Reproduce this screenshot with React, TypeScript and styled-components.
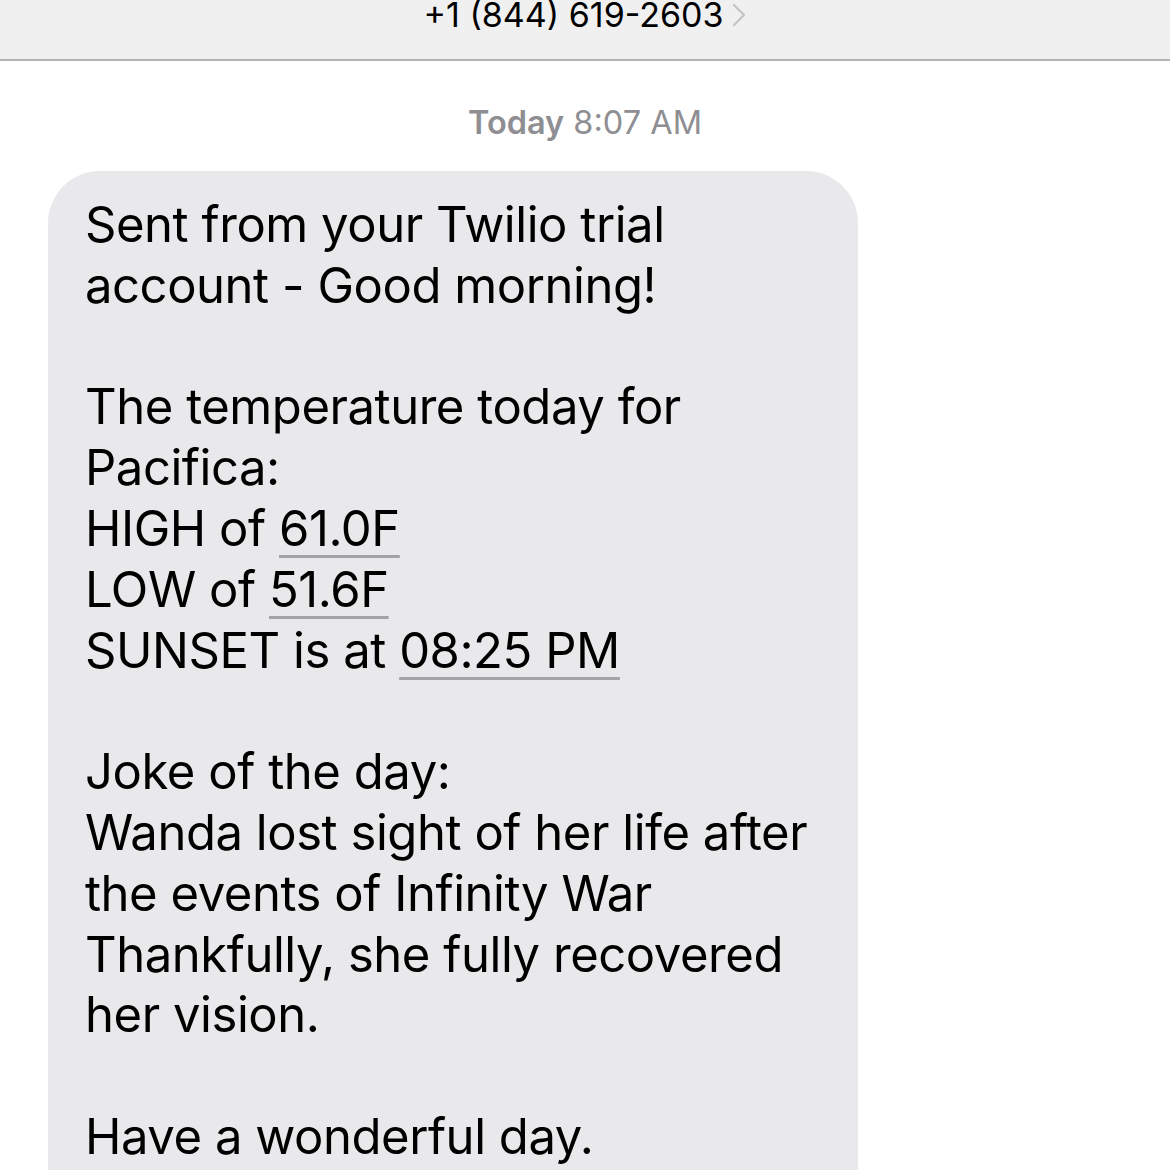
import React from "react";
import styled, { createGlobalStyle } from "styled-components";

const Global = createGlobalStyle`
  html, body { margin: 0; padding: 0; background: #ffffff; }
  body { font-family: Inter, "Liberation Sans", Arial, sans-serif; overflow: hidden; }
`;

const Page = styled.div`
  width: 1170px;
  height: 1170px;
  overflow: hidden;
  background: #ffffff;
  display: flex;
  flex-direction: column;
`;

const Header = styled.header`
  height: 61px;
  flex: none;
  background: #f0f0f1;
  border-bottom: 2px solid #b3b3b3;
  box-sizing: border-box;
  display: flex;
  justify-content: center;
  align-items: flex-start;
`;

const Contact = styled.div`
  display: flex;
  align-items: center;
  gap: 9px;
  margin-top: -5px;
  font-size: 34px;
  line-height: 40px;
  color: #000;
  letter-spacing: 0px;
`;

const Chevron = styled.svg`
  width: 14px;
  height: 24px;
  margin-top: 0px;
`;

const Stamp = styled.div`
  margin-top: 42px;
  text-align: center;
  font-size: 32.5px;
  line-height: 40px;
  color: #8e8e93;
`;

const StampDay = styled.span`
  font-weight: 600;
`;

const Thread = styled.div`
  padding: 0 0 0 48px;
  margin-top: 28px;
`;

const Bubble = styled.div`
  width: 810px;
  box-sizing: border-box;
  background: #e9e9eb;
  border-radius: 52px;
  padding: 24px 30px 60px 37px;
  color: #000;
  font-size: 49px;
  line-height: 60.8px;
  letter-spacing: -0.45px;
`;

const Line = styled.div`
  white-space: nowrap;
  min-height: 60.8px;
`;

const Data = styled.span`
  text-decoration: underline;
  text-decoration-color: #a3a3a6;
  text-decoration-thickness: 3px;
  text-underline-offset: 9px;
`;

const lines: React.ReactNode[] = [
  "Sent from your Twilio trial",
  "account - Good morning!",
  "",
  "The temperature today for",
  "Pacifica:",
  <>HIGH of <Data>61.0F</Data></>,
  <>LOW of <Data>51.6F</Data></>,
  <>SUNSET is at <Data>08:25 PM</Data></>,
  "",
  "Joke of the day:",
  "Wanda lost sight of her life after",
  "the events of Infinity War",
  "Thankfully, she fully recovered",
  "her vision.",
  "",
  "Have a wonderful day.",
];

export default function App() {
  return (
    <Page>
      <Global />
      <Header>
        <Contact>
          <span>+1 (844) 619-2603</span>
          <Chevron viewBox="0 0 14 24" fill="none">
            <path d="M2 2 L12 12 L2 22" stroke="#c4c4c8" strokeWidth="2.2" strokeLinecap="round" strokeLinejoin="round" />
          </Chevron>
        </Contact>
      </Header>
      <Stamp>
        <StampDay>Today</StampDay> 8:07 AM
      </Stamp>
      <Thread>
        <Bubble>
          {lines.map((l, i) => (
            <Line key={i}>{l}</Line>
          ))}
        </Bubble>
      </Thread>
    </Page>
  );
}
